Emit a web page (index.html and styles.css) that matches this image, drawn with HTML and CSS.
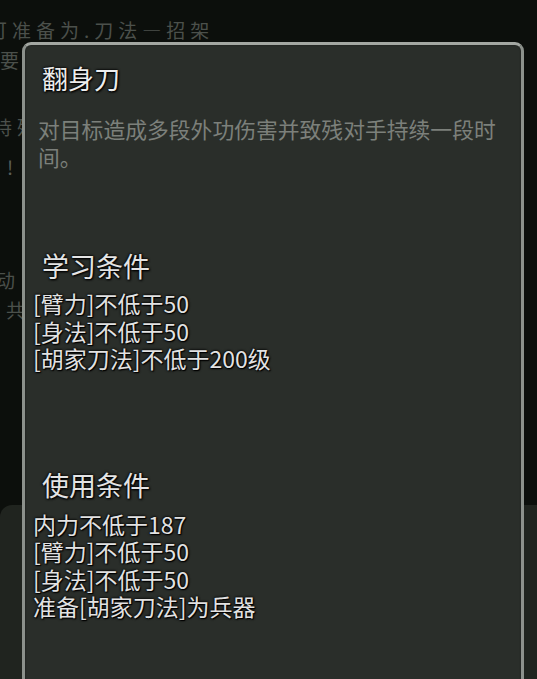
FILE: index.html
```html
<!DOCTYPE html>
<html lang="zh-CN">
<head>
    <meta charset="UTF-8">
    <meta name="viewport" content="width=device-width, initial-scale=1.0">
    <title>翻身刀</title>
    <link rel="stylesheet" href="styles.css">
</head>
<body>
    <div class="scene">
        <!-- 背景里的战斗日志 -->
        <div class="log">
            <div class="log-line first">可准备为.刀法—招架</div>
            <div class="log-line">要</div>
            <div class="log-line gap-lg shift">持残</div>
            <div class="log-line bang">!</div>
            <div class="log-line gap-xl shift-sm">动</div>
            <div class="log-line indent">共</div>
        </div>
        <div class="lower-bar"></div>

        <!-- 武学详情弹窗 -->
        <section class="skill-panel">
            <h2 class="skill-name">翻身刀</h2>
            <p class="skill-desc">对目标造成多段外功伤害并致残对手持续一段时间。</p>

            <h3 class="cond-title learn">学习条件</h3>
            <ul class="cond-list">
                <li>[臂力]不低于50</li>
                <li>[身法]不低于50</li>
                <li>[胡家刀法]不低于200级</li>
            </ul>

            <h3 class="cond-title use">使用条件</h3>
            <ul class="cond-list">
                <li>内力不低于187</li>
                <li>[臂力]不低于50</li>
                <li>[身法]不低于50</li>
                <li>准备[胡家刀法]为兵器</li>
            </ul>
        </section>
    </div>
</body>
</html>
```

FILE: styles.css
```css
body {
    margin: 0;
    background: #0c0f0c;
    font-family: "Noto Sans CJK SC", "Noto Sans", sans-serif;
    overflow: hidden;
}
.scene {
    position: relative;
    height: 679px;
    overflow: hidden;
}
.log {
    height: 505px;
    color: #4b504b;
    font-size: 19px;
    line-height: 30px;
    letter-spacing: 5px;
    white-space: nowrap;
}
.log-line.first {
    padding-top: 15px;
    text-indent: -12px;
}
.log-line.gap-lg {
    margin-top: 37px;
}
.log-line.shift {
    text-indent: -7px;
}
.log-line.bang {
    margin-top: 10px;
    padding-left: 7px;
    color: #5a5f5a;
}
.log-line.gap-xl {
    margin-top: 83px;
}
.log-line.shift-sm {
    text-indent: -4px;
}
.log-line.indent {
    padding-left: 6px;
}
.lower-bar {
    height: 174px;
    background: #20241f;
    border-radius: 12px 0 0 0;
}

.skill-panel {
    position: absolute;
    left: 22px;
    top: 42px;
    right: 13px;
    bottom: -20px;
    padding: 18px 14px 0 8px;
    background: #2a2e2a;
    border: 3px solid #8c918c;
    border-top-color: #a3a7a2;
    border-radius: 9px 9px 0 0;
    box-shadow: inset 0 0 2px rgba(0,0,0,0.5);
}
.skill-name {
    margin: 0 0 22px 9px;
    font-size: 26px;
    font-weight: normal;
    line-height: 30px;
    color: #ededed;
    text-shadow: 0 0 2px #000, 0 0 3px #000, 1px 1px 2px #000;
}
.skill-desc {
    margin: 0 0 0 5px;
    font-size: 21.8px;
    line-height: 27.5px;
    color: #7c807b;
}
.cond-title {
    margin: 0 0 8px 9px;
    font-size: 27px;
    font-weight: normal;
    line-height: 32px;
    color: #e4e4e4;
    text-shadow: 0 0 2px #000, 0 0 3px #000, 1px 1px 2px #000;
}
.cond-title.learn {
    margin-top: 80px;
}
.cond-title.use {
    margin-top: 96px;
    margin-bottom: 10px;
}
.cond-list {
    list-style: none;
    margin: 0;
    padding: 0;
    font-size: 23px;
    line-height: 27.5px;
    color: #e2e2e2;
    text-shadow: 0 0 2px #000, 0 0 3px #000, 1px 1px 1px #000;
}
```
